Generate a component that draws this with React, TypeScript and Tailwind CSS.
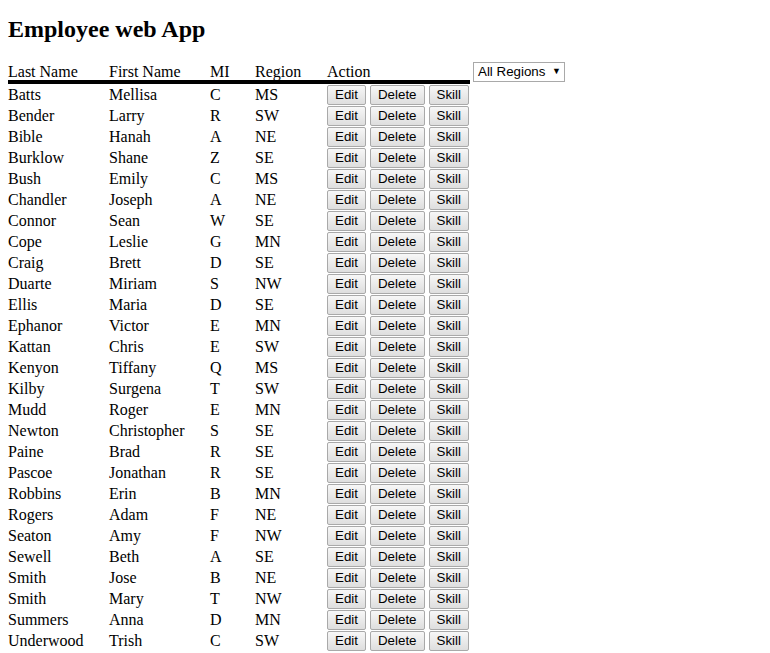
import React from 'react';

interface Employee {
  last: string;
  first: string;
  mi: string;
  region: string;
}

const employees: Employee[] = [
  { last: 'Batts', first: 'Mellisa', mi: 'C', region: 'MS' },
  { last: 'Bender', first: 'Larry', mi: 'R', region: 'SW' },
  { last: 'Bible', first: 'Hanah', mi: 'A', region: 'NE' },
  { last: 'Burklow', first: 'Shane', mi: 'Z', region: 'SE' },
  { last: 'Bush', first: 'Emily', mi: 'C', region: 'MS' },
  { last: 'Chandler', first: 'Joseph', mi: 'A', region: 'NE' },
  { last: 'Connor', first: 'Sean', mi: 'W', region: 'SE' },
  { last: 'Cope', first: 'Leslie', mi: 'G', region: 'MN' },
  { last: 'Craig', first: 'Brett', mi: 'D', region: 'SE' },
  { last: 'Duarte', first: 'Miriam', mi: 'S', region: 'NW' },
  { last: 'Ellis', first: 'Maria', mi: 'D', region: 'SE' },
  { last: 'Ephanor', first: 'Victor', mi: 'E', region: 'MN' },
  { last: 'Kattan', first: 'Chris', mi: 'E', region: 'SW' },
  { last: 'Kenyon', first: 'Tiffany', mi: 'Q', region: 'MS' },
  { last: 'Kilby', first: 'Surgena', mi: 'T', region: 'SW' },
  { last: 'Mudd', first: 'Roger', mi: 'E', region: 'MN' },
  { last: 'Newton', first: 'Christopher', mi: 'S', region: 'SE' },
  { last: 'Paine', first: 'Brad', mi: 'R', region: 'SE' },
  { last: 'Pascoe', first: 'Jonathan', mi: 'R', region: 'SE' },
  { last: 'Robbins', first: 'Erin', mi: 'B', region: 'MN' },
  { last: 'Rogers', first: 'Adam', mi: 'F', region: 'NE' },
  { last: 'Seaton', first: 'Amy', mi: 'F', region: 'NW' },
  { last: 'Sewell', first: 'Beth', mi: 'A', region: 'SE' },
  { last: 'Smith', first: 'Jose', mi: 'B', region: 'NE' },
  { last: 'Smith', first: 'Mary', mi: 'T', region: 'NW' },
  { last: 'Summers', first: 'Anna', mi: 'D', region: 'MN' },
  { last: 'Underwood', first: 'Trish', mi: 'C', region: 'SW' },
];

const Btn: React.FC<{ label: string }> = ({ label }) => (
  <button className="h-[20px] px-[7px] border border-[#a9a9a9] rounded-[2px] bg-gradient-to-b from-[#f7f7f7] to-[#dedede] text-[13.33px] leading-[18px] text-black font-['Liberation_Sans',Arial,sans-serif] align-middle">
    {label}
  </button>
);

export default function App() {
  return (
    <div className="pl-2 bg-white min-h-[653px] text-black font-['Liberation_Serif','Times_New_Roman',serif]">
      <h2 className="pt-[15px] text-[24px] leading-[28px] font-bold">Employee web App</h2>

      <div className="flex items-start mt-[19px]">
        <table className="text-[16px] text-left">
          <thead>
            <tr className="border-b-4 border-black">
              <th className="w-[101px] h-[18px] p-0 pt-[2px] leading-[16px] font-normal">Last Name</th>
              <th className="w-[101px] h-[18px] p-0 pt-[2px] leading-[16px] font-normal">First Name</th>
              <th className="w-[45px] h-[18px] p-0 pt-[2px] leading-[16px] font-normal">MI</th>
              <th className="w-[72px] h-[18px] p-0 pt-[2px] leading-[16px] font-normal">Region</th>
              <th className="w-[143px] h-[18px] p-0 pt-[2px] leading-[16px] font-normal">Action</th>
            </tr>
          </thead>
          <tbody>
            {employees.map((e, i) => (
              <tr key={i} className="h-[21px]">
                <td className="p-0 pt-[1px] leading-[20px]">{e.last}</td>
                <td className="p-0 pt-[1px] leading-[20px]">{e.first}</td>
                <td className="p-0 pt-[1px] leading-[20px]">{e.mi}</td>
                <td className="p-0 pt-[1px] leading-[20px]">{e.region}</td>
                <td className="p-0 leading-[21px]">
                  <div className="flex gap-[4px] items-center">
                    <Btn label="Edit" />
                    <Btn label="Delete" />
                    <Btn label="Skill" />
                  </div>
                </td>
              </tr>
            ))}
          </tbody>
        </table>

        {/* Region filter */}
        <div className="ml-[3px] w-[92px] h-[20px] border border-[#a9a9a9] flex items-center justify-between pl-[4px] pr-[3px] text-[13.33px] font-['Liberation_Sans',Arial,sans-serif]">
          <span>All Regions</span>
          <span className="text-[9px]">▼</span>
        </div>
      </div>
    </div>
  );
}
